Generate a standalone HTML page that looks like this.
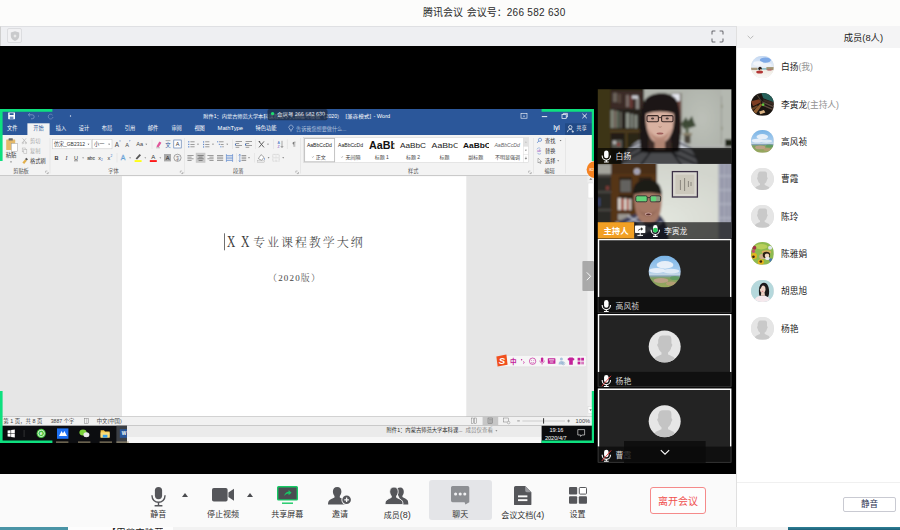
<!DOCTYPE html>
<html lang="zh-CN">
<head>
<meta charset="utf-8">
<title>腾讯会议</title>
<style>
html,body{margin:0;padding:0;}
body{width:900px;height:530px;overflow:hidden;position:relative;background:#fdfdfd;font-family:"Liberation Sans","Noto Sans CJK SC",sans-serif;color:#333;}
.abs{position:absolute;}
#titlebar{left:0;top:0;width:900px;height:26px;background:#fcfcfb;}
#title{left:423px;top:5px;font-size:10px;line-height:16px;color:#2a2a2a;white-space:pre;}
#title b{font-weight:normal;letter-spacing:0.3px;}
#title s{text-decoration:none;display:inline-block;width:3.7px;}
#topbar{left:0;top:26px;width:736px;height:20px;background:#eeeff2;border-top:1px solid #dfe0e3;box-sizing:border-box;border-left:1px solid #cfcfcf;}
#stage{left:0;top:46px;width:736px;height:428px;background:#000;}
#toolbar{left:0;top:474px;width:736px;height:53px;background:#fafafa;}
#panel{left:736px;top:26px;width:164px;height:501px;background:#fff;border-left:1px solid #e0e0e0;box-sizing:border-box;}
#phead{left:0;top:0;width:163px;height:22px;background:#f4f4f5;}
#phead .t{right:17px;top:5px;font-size:9.3px;line-height:14px;color:#222;}
.mem{left:0;width:163px;height:22px;}
.mem .av{left:14.1px;top:-0.6px;width:22.6px;height:22.6px;border-radius:50%;overflow:hidden;background:#e2e2e2;}
.mem .nm{left:44px;top:3px;font-size:8.7px;line-height:16px;color:#222;white-space:nowrap;}
.mem .nm i{font-style:normal;color:#929292;}
.tb{position:absolute;top:0;height:53px;width:60px;text-align:center;}
.tb .lb{position:absolute;left:0;right:0;top:35px;font-size:8px;line-height:12px;color:#333;white-space:nowrap;}
.tb svg{position:absolute;}
.caret{position:absolute;width:0;height:0;border-left:3.5px solid transparent;border-right:3.5px solid transparent;border-bottom:4px solid #4a4b4f;}
#leave{left:650px;top:487px;width:56px;height:27px;box-sizing:border-box;border:1px solid #f58a8a;border-radius:3px;color:#f0504e;font-size:10px;line-height:28px;text-align:center;background:#fdfdfd;}
#mutebtn{left:106px;top:471px;width:53px;height:15px;box-sizing:border-box;border:1px solid #c9cad2;border-radius:2px;color:#2a3050;font-size:8.6px;line-height:13px;text-align:center;background:#fff;}
</style>
</head>
<body>
<div id="titlebar" class="abs"></div>
<div id="title" class="abs">腾讯会议<s> </s>会议号：<b>266 582 630</b></div>

<div id="topbar" class="abs">
  <div class="abs" style="left:6px;top:1px;width:15px;height:14.5px;border:1px solid #dcdde0;border-radius:2px;box-sizing:border-box;background:#f1f1f3;"></div>
  <svg class="abs" style="left:9px;top:4px" width="10" height="10" viewBox="0 0 10 10"><path d="M5 0.3 L9.2 1.6 V5 C9.2 7.6 7 9.2 5 9.9 C3 9.2 0.8 7.6 0.8 5 V1.6 Z" fill="#c9cacc"/><path d="M5 3 L5.6 4.4 L7 5 L5.6 5.6 L5 7 L4.4 5.6 L3 5 L4.4 4.4 Z" fill="#f4f4f4"/></svg>
  <svg class="abs" style="left:710px;top:2.6px" width="13" height="13" viewBox="0 0 13 13" fill="none" stroke="#6a6b70" stroke-width="1.05"><path d="M1 4.4V1.9Q1 1 1.9 1H4.4M8.6 1H11.1Q12 1 12 1.9V4.4M12 8.6V11.1Q12 12 11.1 12H8.6M4.4 12H1.9Q1 12 1 11.1V8.6"/></svg>
</div>

<div id="stage" class="abs"></div>

<!-- SHARED SCREEN -->
<!--WORD-->
<svg class="abs" style="left:0;top:109px" width="594" height="334" viewBox="0 109 594 334" font-family="Liberation Sans, Noto Sans CJK SC, sans-serif">
<rect x="0" y="109" width="594" height="26" fill="#2b579a"/>
<rect x="0" y="135" width="594" height="40.5" fill="#f3f3f3"/>
<rect x="0" y="175" width="594" height="0.8" fill="#d6d6d6"/>
<rect x="0" y="175.8" width="594" height="240.4" fill="#e6e6e6"/>
<rect x="122" y="176.2" width="344.3" height="240" fill="#ffffff"/>
<rect x="587.5" y="175.8" width="6.5" height="240.4" fill="#efefef"/>
<rect x="588" y="183" width="5.5" height="15" fill="#ffffff" stroke="#d0d0d0" stroke-width="0.4"/>
<path d="M589.3 179.8L590.8 178L592.3 179.8Z" fill="#777"/>
<rect x="588" y="406.5" width="5" height="7" fill="#fdfdfd" stroke="#cfcfcf" stroke-width="0.4"/>
<path d="M589.3 409.3L590.6 411L591.9 409.3Z" fill="#666"/>
<rect x="0" y="416.2" width="594" height="9.6" fill="#f1f1f1"/>
<rect x="0" y="425.8" width="594" height="11.2" fill="#ebebeb"/>
<rect x="0" y="437" width="594" height="6" fill="#f7f7f7"/>
<rect x="0" y="425.8" width="127" height="17.2" fill="#0c0d10"/>
<rect x="541.6" y="425.8" width="52.4" height="17.2" fill="#0b0c0e"/>
<rect x="8.2" y="112.4" width="6.8" height="6.8" rx="0.4" fill="#fff"/><rect x="9.6" y="113.2" width="4" height="1.8" fill="#2b579a"/><rect x="9.8" y="116.6" width="3.6" height="2.6" fill="#6f8dc0"/>
<path d="M28.6 114.8H32.2A2 2 0 0 1 32.2 118.8H31" fill="none" stroke="#7f9ac6" stroke-width="0.8"/><path d="M30 113.2L28.2 114.8L30 116.4" fill="none" stroke="#7f9ac6" stroke-width="0.8"/>
<circle cx="38.5" cy="116" r="0.5" fill="#7f9ac6"/>
<path d="M52.6 115.2A2.4 2.4 0 1 0 53 117" fill="none" stroke="#6f8cbd" stroke-width="0.8"/>
<circle cx="70.5" cy="116" r="0.7" fill="#dfe6f2"/>
<text x="203.3" y="117.6" font-size="5.0" fill="#ffffff" text-anchor="start" textLength="139" lengthAdjust="spacingAndGlyphs">附件1：内蒙古师范大学本科课程教学大纲编写模板（2020）</text>
<text x="345.4" y="117.6" font-size="5.1" fill="#ffffff" text-anchor="start" textLength="25.6" lengthAdjust="spacingAndGlyphs">[兼容模式]</text>
<text x="373.4" y="117.7" font-size="5.9" fill="#ffffff" text-anchor="start" textLength="16.8" lengthAdjust="spacingAndGlyphs">- Word</text>
<rect x="267.5" y="109" width="60" height="11.2" rx="2" fill="#1d2a3f" opacity="0.72"/>
<circle cx="272.6" cy="113.6" r="1.7" fill="#1edc6e"/>
<text x="277" y="116" font-size="5.2" fill="#e8edf5" text-anchor="start" textLength="48" lengthAdjust="spacingAndGlyphs" transform="rotate(-1.2 300 115)">会议号 266 582 630</text>
<rect x="521" y="113.4" width="6" height="4.8" fill="none" stroke="#fff" stroke-width="0.6"/><path d="M523 116.6L524 115.2L525 116.6Z" fill="#fff"/>
<rect x="541.8" y="116.2" width="5.4" height="0.9" fill="#fff"/>
<rect x="562" y="114.6" width="4.2" height="3.8" fill="none" stroke="#fff" stroke-width="0.7"/><path d="M563.4 114.6V113.4H567.4V117H566.2" fill="none" stroke="#fff" stroke-width="0.7"/>
<path d="M582.4 113.8L586.8 118.2M586.8 113.8L582.4 118.2" stroke="#fff" stroke-width="0.9"/>
<rect x="27.4" y="123.3" width="22.2" height="12" fill="#f3f3f3"/>
<text x="12.3" y="130.3" font-size="5.2" fill="#ffffff" text-anchor="middle" >文件</text>
<text x="61" y="130.3" font-size="5.2" fill="#ffffff" text-anchor="middle" >插入</text>
<text x="84" y="130.3" font-size="5.2" fill="#ffffff" text-anchor="middle" >设计</text>
<text x="107" y="130.3" font-size="5.2" fill="#ffffff" text-anchor="middle" >布局</text>
<text x="130" y="130.3" font-size="5.2" fill="#ffffff" text-anchor="middle" >引用</text>
<text x="153" y="130.3" font-size="5.2" fill="#ffffff" text-anchor="middle" >邮件</text>
<text x="176.6" y="130.3" font-size="5.2" fill="#ffffff" text-anchor="middle" >审阅</text>
<text x="199.6" y="130.3" font-size="5.2" fill="#ffffff" text-anchor="middle" >视图</text>
<text x="230.3" y="130.3" font-size="5.2" fill="#ffffff" text-anchor="middle" textLength="25.5" lengthAdjust="spacingAndGlyphs">MathType</text>
<text x="266" y="130.3" font-size="5.2" fill="#ffffff" text-anchor="middle" >特色功能</text>
<text x="38.4" y="130.3" font-size="5.2" fill="#2b579a" text-anchor="middle" >开始</text>
<path d="M289.9 129A2.1 2.1 0 1 1 292.1 129V130H289.9ZM290.2 131H291.8" fill="none" stroke="#d0dbec" stroke-width="0.55"/>
<text x="296" y="130.6" font-size="5.2" fill="#b4c4de" text-anchor="start" textLength="50.5" lengthAdjust="spacingAndGlyphs">告诉我您想要做什么...</text>
<rect x="565" y="123.3" width="27.5" height="11.7" fill="#224a86"/>
<circle cx="570.3" cy="127.2" r="1.7" fill="none" stroke="#fff" stroke-width="0.7"/><path d="M567.4 132.2C567.6 130.2 568.8 129.4 570.3 129.4C571.2 129.4 572 129.7 572.5 130.4" fill="none" stroke="#fff" stroke-width="0.7"/><path d="M571.6 131.6H574M572.8 130.4V132.8" stroke="#fff" stroke-width="0.6"/>
<text x="581.5" y="130.4" font-size="5.3" fill="#ffffff" text-anchor="middle" >共享</text>
<text x="556.6" y="130.4" font-size="6.4" fill="#ffffff" text-anchor="middle" stroke="#fff" stroke-width="0.12">lyl</text>
<rect x="6.2" y="139.4" width="9" height="10.6" rx="0.6" fill="#e4b96a"/><rect x="8.6" y="138.2" width="4.2" height="2.2" rx="0.5" fill="#6b6b6b"/><rect x="11.2" y="143.4" width="6.2" height="8" fill="#ffffff" stroke="#8a8a8a" stroke-width="0.4"/>
<text x="11" y="157.4" font-size="5.3" fill="#333" text-anchor="middle" >粘贴</text>
<path d="M10 161.6L11 162.8L12 161.6Z" fill="#666"/>
<path d="M22.6 138.4L26 142.6M26 138.4L22.6 142.6" stroke="#a8a8a8" stroke-width="0.6"/><circle cx="22.8" cy="143" r="0.8" fill="none" stroke="#a8a8a8" stroke-width="0.5"/><circle cx="25.8" cy="143" r="0.8" fill="none" stroke="#a8a8a8" stroke-width="0.5"/>
<text x="30" y="142.6" font-size="5.2" fill="#aaaaaa" text-anchor="start" >剪切</text>
<rect x="22.2" y="148" width="3" height="3.8" fill="#f3f3f3" stroke="#b0b0b0" stroke-width="0.5"/><rect x="23.8" y="149.6" width="3" height="3.8" fill="#f3f3f3" stroke="#b0b0b0" stroke-width="0.5"/>
<text x="30" y="152.8" font-size="5.2" fill="#aaaaaa" text-anchor="start" >复制</text>
<path d="M22.4 162.6L25 159.4L26.8 160.8L24.2 164Z" fill="#e2b04c"/><path d="M25 159.2L26.2 157.8L28 159.2L26.8 160.6Z" fill="#555"/>
<text x="30" y="162.8" font-size="5.2" fill="#333" text-anchor="start" >格式刷</text>
<text x="21" y="173.2" font-size="5.2" fill="#555" text-anchor="middle" >剪贴板</text>
<path d="M45.599999999999994 171.0H47.4M45.599999999999994 171.0V172.79999999999998" stroke="#777" stroke-width="0.4" fill="none"/><path d="M48.199999999999996 172.0V173.6H46.599999999999994" stroke="#777" stroke-width="0.5" fill="none"/>
<rect x="49.75" y="138" width="0.5" height="35.5" fill="#dadada"/>
<rect x="52.6" y="139.6" width="38.6" height="9.2" fill="#fff" stroke="#c6c6c6" stroke-width="0.5"/>
<text x="54" y="146.1" font-size="5.2" fill="#333" text-anchor="start" textLength="31" lengthAdjust="spacingAndGlyphs">仿宋_GB2312</text>
<path d="M87.6 143.8L88.5 144.9L89.4 143.8Z" fill="#555"/>
<rect x="92.6" y="139.6" width="19.4" height="9.2" fill="#fff" stroke="#c6c6c6" stroke-width="0.5"/>
<text x="94" y="146.1" font-size="5.2" fill="#333" text-anchor="start" >小一</text>
<path d="M108.2 143.8L109.1 144.9L110 143.8Z" fill="#555"/>
<text x="117" y="146.6" font-size="6.4" fill="#444" text-anchor="middle" >A</text>
<path d="M119.2 141.2L120 140.2L120.8 141.2Z" fill="#3b6fc4"/>
<text x="127" y="146.6" font-size="5.6" fill="#444" text-anchor="middle" >A</text>
<path d="M129 140.4L129.8 141.4L130.6 140.4Z" fill="#3b6fc4"/>
<text x="139.6" y="146.4" font-size="5.6" fill="#444" text-anchor="middle" >Aa</text>
<path d="M145.4 143.8L146.3 144.9L147.2 143.8Z" fill="#666"/>
<rect x="151.75" y="139.5" width="0.5" height="9.5" fill="#dadada"/>
<path d="M156.4 146.4L159.4 141.6L161.4 142.8L158.4 147.6Z" fill="#e0559a"/><path d="M156 147.8H160" stroke="#888" stroke-width="0.5"/>
<text x="168" y="146.6" font-size="5.4" fill="#2b579a" text-anchor="middle" >文</text>
<path d="M165.6 140.6H170.4" stroke="#555" stroke-width="0.4"/>
<rect x="173.8" y="140" width="7.4" height="8" fill="#fff" stroke="#4a6fa8" stroke-width="0.6"/>
<text x="177.5" y="146.4" font-size="5.6" fill="#333" text-anchor="middle" >A</text>
<text x="56.5" y="159.8" font-size="5.6" fill="#333" text-anchor="middle" font-weight="bold">B</text>
<text x="66.5" y="159.8" font-size="5.6" fill="#333" text-anchor="middle" font-style="italic" font-family="Liberation Serif, serif">I</text>
<text x="76" y="159.6" font-size="5.6" fill="#333" text-anchor="middle" >U</text>
<path d="M74 160.8H78" stroke="#333" stroke-width="0.5"/>
<path d="M82.2 157.4L83.1 158.5L84 157.4Z" fill="#666"/>
<text x="91" y="159.6" font-size="4.8" fill="#444" text-anchor="middle" >abc</text>
<path d="M87.2 157.9H94.8" stroke="#444" stroke-width="0.4"/>
<text x="99.6" y="159.8" font-size="5.4" fill="#333" text-anchor="middle" >x</text>
<text x="102" y="161.2" font-size="3.2" fill="#3b6fc4" text-anchor="middle" >2</text>
<text x="108.8" y="159.8" font-size="5.4" fill="#333" text-anchor="middle" >x</text>
<text x="111.4" y="157" font-size="3.2" fill="#3b6fc4" text-anchor="middle" >2</text>
<rect x="116.75" y="153" width="0.5" height="9.5" fill="#dadada"/>
<text x="123" y="160.2" font-size="6.8" fill="#f3f3f3" text-anchor="middle" stroke="#5b9bd5" stroke-width="0.45">A</text>
<path d="M129.2 157.4L130.1 158.5L131 157.4Z" fill="#666"/>
<path d="M135.6 158.4L139.6 154L141 155.2L137 159.4Z" fill="#555"/><rect x="134.6" y="160.2" width="7" height="1.7" fill="#ffff00"/>
<path d="M144.4 157.4L145.3 158.5L146.2 157.4Z" fill="#666"/>
<text x="153.2" y="159.4" font-size="6" fill="#333" text-anchor="middle" >A</text>
<rect x="149.8" y="160.2" width="7" height="1.7" fill="#ff0000"/>
<path d="M159.4 157.4L160.3 158.5L161.2 157.4Z" fill="#666"/>
<rect x="164" y="154" width="7" height="7.4" fill="#a9a9a9"/>
<text x="167.5" y="160" font-size="5.6" fill="#222" text-anchor="middle" >A</text>
<circle cx="177.5" cy="157.8" r="3.6" fill="none" stroke="#555" stroke-width="0.5"/>
<text x="177.5" y="159.6" font-size="4.2" fill="#444" text-anchor="middle" >字</text>
<text x="113.5" y="173.2" font-size="5.2" fill="#555" text-anchor="middle" >字体</text>
<path d="M180.3 171.0H182.1M180.3 171.0V172.79999999999998" stroke="#777" stroke-width="0.4" fill="none"/><path d="M182.9 172.0V173.6H181.3" stroke="#777" stroke-width="0.5" fill="none"/>
<rect x="184.15" y="138" width="0.5" height="35.5" fill="#dadada"/>
<rect x="188.2" y="141.3" width="1.1" height="1.1" fill="#3b6fc4"/>
<rect x="188.2" y="143.8" width="1.1" height="1.1" fill="#3b6fc4"/>
<rect x="188.2" y="146.3" width="1.1" height="1.1" fill="#3b6fc4"/>
<rect x="190.4" y="141.6" width="4.2" height="0.55" fill="#555"/>
<rect x="190.4" y="144.1" width="4.2" height="0.55" fill="#555"/>
<rect x="190.4" y="146.6" width="4.2" height="0.55" fill="#555"/>
<path d="M197.1 143.8L198 144.9L198.9 143.8Z" fill="#666"/>
<rect x="203.2" y="141.3" width="0.9" height="1.3" fill="#3b6fc4"/>
<rect x="203.2" y="143.8" width="0.9" height="1.3" fill="#3b6fc4"/>
<rect x="203.2" y="146.3" width="0.9" height="1.3" fill="#3b6fc4"/>
<rect x="205.2" y="141.6" width="4.2" height="0.55" fill="#555"/>
<rect x="205.2" y="144.1" width="4.2" height="0.55" fill="#555"/>
<rect x="205.2" y="146.6" width="4.2" height="0.55" fill="#555"/>
<path d="M212.1 143.8L213 144.9L213.9 143.8Z" fill="#666"/>
<rect x="217.2" y="141.3" width="1" height="1" fill="#3b6fc4"/><rect x="218.8" y="143.8" width="1" height="1" fill="#3b6fc4"/><rect x="220.4" y="146.3" width="1" height="1" fill="#3b6fc4"/>
<rect x="219" y="141.6" width="4.6" height="0.55" fill="#555"/><rect x="220.6" y="144.1" width="3" height="0.55" fill="#555"/><rect x="222.2" y="146.6" width="1.6" height="0.55" fill="#555"/>
<path d="M226.29999999999998 143.8L227.2 144.9L228.1 143.8Z" fill="#666"/>
<rect x="232.25" y="139.5" width="0.5" height="9.5" fill="#dadada"/>
<rect x="235.6" y="141.2" width="6.4" height="0.55" fill="#555"/>
<rect x="235.6" y="143.1" width="3.6" height="0.55" fill="#555"/>
<rect x="235.6" y="145.0" width="6.4" height="0.55" fill="#555"/>
<rect x="235.6" y="146.89999999999998" width="3.6" height="0.55" fill="#555"/>
<path d="M236 143.2V146L234.8 144.6Z" fill="#3b6fc4"/>
<rect x="245.6" y="141.2" width="6.4" height="0.55" fill="#555"/>
<rect x="245.6" y="143.1" width="3.6" height="0.55" fill="#555"/>
<rect x="245.6" y="145.0" width="6.4" height="0.55" fill="#555"/>
<rect x="245.6" y="146.89999999999998" width="3.6" height="0.55" fill="#555"/>
<path d="M245 143.2V146L246.4 144.6Z" fill="#3b6fc4"/>
<rect x="255.35" y="139.5" width="0.5" height="9.5" fill="#dadada"/>
<path d="M259 141.4L264 147.4M264 141.4L259 147.4" stroke="#555" stroke-width="0.9"/><path d="M258.6 141.2L260.4 141.2L259.4 142.6Z" fill="#333"/>
<path d="M267.1 143.8L268 144.9L268.9 143.8Z" fill="#666"/>
<rect x="273.25" y="139.5" width="0.5" height="9.5" fill="#dadada"/>
<text x="278.6" y="143.6" font-size="3.6" fill="#3b6fc4" text-anchor="middle" >A</text>
<text x="278.6" y="147.8" font-size="3.6" fill="#8a4fbf" text-anchor="middle" >Z</text>
<path d="M282 140.8V147.2M280.8 146L282 147.6L283.2 146" stroke="#555" stroke-width="0.5" fill="none"/>
<rect x="286.95" y="139.5" width="0.5" height="9.5" fill="#dadada"/>
<path d="M294.8 142V146.8M293.8 142V146.8M293.8 142H295.6" stroke="#666" stroke-width="0.4" fill="none"/><path d="M292.6 143.2A1.2 1.2 0 0 1 293.8 142V144.4A1.2 1.2 0 0 1 292.6 143.2Z" fill="#666"/>
<rect x="187.4" y="155.0" width="6.2" height="0.55" fill="#555"/>
<rect x="187.4" y="156.8" width="4.2" height="0.55" fill="#555"/>
<rect x="187.4" y="158.6" width="6.2" height="0.55" fill="#555"/>
<rect x="187.4" y="160.4" width="4.2" height="0.55" fill="#555"/>
<rect x="195.8" y="152.8" width="9.6" height="10" fill="#c9c9c9"/>
<rect x="197.5" y="155.0" width="6.2" height="0.55" fill="#444"/>
<rect x="198.6" y="156.8" width="4" height="0.55" fill="#444"/>
<rect x="197.5" y="158.6" width="6.2" height="0.55" fill="#444"/>
<rect x="198.6" y="160.4" width="4" height="0.55" fill="#444"/>
<rect x="207.4" y="155.0" width="6.2" height="0.55" fill="#555"/>
<rect x="209.4" y="156.8" width="4.2" height="0.55" fill="#555"/>
<rect x="207.4" y="158.6" width="6.2" height="0.55" fill="#555"/>
<rect x="209.4" y="160.4" width="4.2" height="0.55" fill="#555"/>
<rect x="217" y="155.0" width="6.2" height="0.55" fill="#555"/>
<rect x="217" y="156.8" width="6.2" height="0.55" fill="#555"/>
<rect x="217" y="158.6" width="6.2" height="0.55" fill="#555"/>
<rect x="217" y="160.4" width="6.2" height="0.55" fill="#555"/>
<rect x="226.4" y="155.0" width="6.2" height="0.55" fill="#3b6fc4"/>
<rect x="226.4" y="156.8" width="6.2" height="0.55" fill="#3b6fc4"/>
<rect x="226.4" y="158.6" width="6.2" height="0.55" fill="#3b6fc4"/>
<rect x="226.4" y="160.4" width="6.2" height="0.55" fill="#3b6fc4"/>
<path d="M226.4 154V162M232.6 154V162" stroke="#3b6fc4" stroke-width="0.5"/>
<rect x="236.35" y="153" width="0.5" height="9.5" fill="#dadada"/>
<rect x="241.6" y="155.0" width="4.6" height="0.55" fill="#555"/>
<rect x="241.6" y="156.8" width="4.6" height="0.55" fill="#555"/>
<rect x="241.6" y="158.6" width="4.6" height="0.55" fill="#555"/>
<rect x="241.6" y="160.4" width="4.6" height="0.55" fill="#555"/>
<path d="M239.8 154.4V161.6M238.8 155.6L239.8 154.2L240.8 155.6M238.8 160.4L239.8 161.8L240.8 160.4" stroke="#3b6fc4" stroke-width="0.5" fill="none"/>
<path d="M248.1 157.3L249 158.4L249.9 157.3Z" fill="#666"/>
<rect x="254.35" y="153" width="0.5" height="9.5" fill="#dadada"/>
<path d="M258.4 158.6L261 154.6L264 157.2L261.6 160.4Z" fill="#fff" stroke="#555" stroke-width="0.5"/><rect x="257.6" y="160.8" width="7" height="1.4" fill="#e8e8e8" stroke="#999" stroke-width="0.3"/><path d="M264.4 157.8C265 158.8 265.2 159.4 264.6 159.8C264 159.4 264 158.8 264.4 157.8Z" fill="#3b6fc4"/>
<path d="M267.70000000000005 157.3L268.6 158.4L269.5 157.3Z" fill="#666"/>
<rect x="272.8" y="154.4" width="6.4" height="6.8" fill="none" stroke="#b5b5b5" stroke-width="0.5" stroke-dasharray="0.8 0.6"/><path d="M276 154.4V161.2M272.8 157.8H279.2" stroke="#b5b5b5" stroke-width="0.4" stroke-dasharray="0.8 0.6"/>
<path d="M282.3 157.3L283.2 158.4L284.09999999999997 157.3Z" fill="#666"/>
<text x="238.3" y="173.2" font-size="5.2" fill="#555" text-anchor="middle" >段落</text>
<path d="M295.8 171.0H297.6M295.8 171.0V172.79999999999998" stroke="#777" stroke-width="0.4" fill="none"/><path d="M298.4 172.0V173.6H296.8" stroke="#777" stroke-width="0.5" fill="none"/>
<rect x="300.15" y="138" width="0.5" height="35.5" fill="#dadada"/>
<rect x="303.7" y="137.6" width="224.8" height="25" fill="#ffffff" stroke="#d0d0d0" stroke-width="0.5"/>
<rect x="304.6" y="138.4" width="30" height="23.4" fill="#fff" stroke="#bdbdbd" stroke-width="0.9"/>
<text x="319.4" y="147.4" font-size="4.6" fill="#222" text-anchor="middle" textLength="25" lengthAdjust="spacingAndGlyphs">AaBbCcDd</text>
<text x="320.8" y="158.6" font-size="5" fill="#444" text-anchor="middle" >正文</text>
<path d="M312 156.8L312.6 157.6L313.8 156" stroke="#777" stroke-width="0.4" fill="none"/>
<text x="350.6" y="147.4" font-size="4.6" fill="#222" text-anchor="middle" textLength="25" lengthAdjust="spacingAndGlyphs">AaBbCcDd</text>
<text x="353" y="158.6" font-size="5" fill="#444" text-anchor="middle" >无间隔</text>
<path d="M341.2 156.8L341.8 157.6L343 156" stroke="#777" stroke-width="0.4" fill="none"/>
<clipPath id="g3"><rect x="366" y="138" width="28.4" height="24"/></clipPath><clipPath id="g5"><rect x="429" y="138" width="28.6" height="24"/></clipPath><clipPath id="g6"><rect x="460" y="138" width="29" height="24"/></clipPath>
<text x="369" y="149.2" font-size="10.6" fill="#111" text-anchor="start" font-weight="bold" clip-path="url(#g3)" textLength="28" lengthAdjust="spacingAndGlyphs">AaBb</text>
<text x="381.8" y="158.6" font-size="5" fill="#444" text-anchor="middle" >标题 1</text>
<text x="413" y="148.4" font-size="7.4" fill="#222" text-anchor="middle" textLength="26" lengthAdjust="spacingAndGlyphs">AaBbC</text>
<text x="413" y="158.6" font-size="5" fill="#444" text-anchor="middle" >标题 2</text>
<text x="431.6" y="148.4" font-size="7.4" fill="#222" text-anchor="start" clip-path="url(#g5)" textLength="32" lengthAdjust="spacingAndGlyphs">AaBbCc</text>
<text x="444.4" y="158.6" font-size="5" fill="#444" text-anchor="middle" >标题</text>
<text x="463" y="148.4" font-size="7.4" fill="#111" text-anchor="start" font-weight="bold" clip-path="url(#g6)" textLength="32.4" lengthAdjust="spacingAndGlyphs">AaBbCc</text>
<text x="475.8" y="158.6" font-size="5" fill="#444" text-anchor="middle" >副标题</text>
<text x="507.2" y="147.4" font-size="4.6" fill="#666" text-anchor="middle" font-style="italic" textLength="25.5" lengthAdjust="spacingAndGlyphs">AaBbCcDd</text>
<text x="507.4" y="158.6" font-size="5" fill="#444" text-anchor="middle" >不明显强调</text>
<rect x="523.4" y="137.8" width="5" height="8.2" fill="#e2e2e2"/><rect x="523.4" y="146" width="5" height="0.4" fill="#cfcfcf"/><rect x="523.4" y="154.2" width="5" height="0.4" fill="#cfcfcf"/><rect x="523.2" y="137.8" width="0.4" height="24.6" fill="#cfcfcf"/>
<path d="M525 142.6L525.9 141.5L526.8 142.6Z" fill="#aaa"/><path d="M525 149.8L525.9 150.9L526.8 149.8Z" fill="#555"/><path d="M525 157.2H526.8M525 158.2L525.9 159.3L526.8 158.2Z" fill="#555" stroke="#555" stroke-width="0.3"/>
<text x="413.3" y="173.2" font-size="5.2" fill="#555" text-anchor="middle" >样式</text>
<path d="M528.5999999999999 171.0H530.4M528.5999999999999 171.0V172.79999999999998" stroke="#777" stroke-width="0.4" fill="none"/><path d="M531.1999999999999 172.0V173.6H529.5999999999999" stroke="#777" stroke-width="0.5" fill="none"/>
<rect x="533.15" y="138" width="0.5" height="35.5" fill="#dadada"/>
<circle cx="540" cy="139.8" r="1.6" fill="none" stroke="#3b6fc4" stroke-width="0.6"/><path d="M538.8 141L537.2 142.8" stroke="#3b6fc4" stroke-width="0.7"/>
<text x="545" y="142.6" font-size="5.2" fill="#333" text-anchor="start" >查找</text>
<path d="M559.7 140.1L560.6 141.2L561.5 140.1Z" fill="#666"/>
<text x="539" y="152" font-size="3.6" fill="#8a4fbf" text-anchor="middle" >ab</text>
<path d="M537 149.4A2 2 0 0 1 540.6 148.8M541 153.2A2 2 0 0 1 537.4 152.8" stroke="#3b6fc4" stroke-width="0.4" fill="none"/>
<text x="545" y="152.8" font-size="5.2" fill="#333" text-anchor="start" >替换</text>
<path d="M538 158.2V163L539.2 161.8L540 163.6L540.8 163.2L540 161.6H541.6Z" fill="#fff" stroke="#555" stroke-width="0.4"/>
<text x="545" y="162.8" font-size="5.2" fill="#333" text-anchor="start" >选择</text>
<path d="M557.3000000000001 160.3L558.2 161.4L559.1 160.3Z" fill="#666"/>
<text x="549.6" y="173.2" font-size="5.2" fill="#555" text-anchor="middle" >编辑</text>
<rect x="565.35" y="138" width="0.5" height="35.5" fill="#dadada"/>
<clipPath id="wc"><rect x="0" y="109" width="594" height="334"/></clipPath>
<g clip-path="url(#wc)"><circle cx="595" cy="169.6" r="8.4" fill="#f58220"/><text x="591.6" y="171.4" font-size="4.4" fill="#fff" text-anchor="middle">82</text></g>
<rect x="224" y="233.3" width="0.7" height="17" fill="#333"/>
<text y="247.1" fill="#3c3c3c" font-weight="300" font-family="Liberation Serif, Noto Serif CJK SC, serif"><tspan x="227.1" font-size="16.6" textLength="8.2" lengthAdjust="spacingAndGlyphs">X</tspan><tspan x="240.9" font-size="16.6" textLength="8.4" lengthAdjust="spacingAndGlyphs">X</tspan><tspan x="253.1" y="246.6" font-size="12" textLength="109.6" lengthAdjust="spacing">专业课程教学大纲</tspan></text>
<text x="268" y="280.8" font-size="9" fill="#444" font-weight="300" font-family="Liberation Serif, Noto Serif CJK SC, serif" textLength="52" lengthAdjust="spacing">（2020版）</text>
<rect x="582.4" y="261" width="11.6" height="30" rx="1" fill="#9d9d9d" opacity="0.85"/><path d="M586.8 272.4L590.6 276.3L586.8 280.2" stroke="#ffffff" stroke-width="0.9" fill="none"/>
<rect x="497" y="355.4" width="89.4" height="11.4" rx="1.5" fill="#f6f6f6" stroke="#d8d8d8" stroke-width="0.4"/>
<path d="M496.4 356.4L506.4 354.6L507.6 364.8L497.6 366.6Z" fill="#f0501e"/>
<text x="502" y="364.4" font-size="9.6" fill="#ffffff" text-anchor="middle" font-weight="bold" font-style="italic">S</text>
<text x="513.4" y="363.6" font-size="6.6" fill="#c4239a" text-anchor="middle" font-weight="bold">中</text>
<circle cx="521.6" cy="359.8" r="0.7" fill="#c4239a"/><path d="M523.4 361.6C524.4 361.6 524.4 363 523.4 363.6" stroke="#c4239a" stroke-width="0.8" fill="none"/>
<circle cx="532.6" cy="361.2" r="3.2" fill="none" stroke="#c4239a" stroke-width="0.7"/><circle cx="531.4" cy="360.4" r="0.45" fill="#c4239a"/><circle cx="533.8" cy="360.4" r="0.45" fill="#c4239a"/><path d="M531.2 362.4Q532.6 363.6 534 362.4" stroke="#c4239a" stroke-width="0.5" fill="none"/>
<rect x="540.9" y="357.4" width="2.4" height="4.6" rx="1.2" fill="#c4239a"/><path d="M539.8 360.6A2.3 2.3 0 0 0 544.4 360.6M542.1 363V364.6" stroke="#c4239a" stroke-width="0.6" fill="none"/>
<rect x="547.8" y="358.2" width="7.6" height="5.6" rx="0.6" fill="#c4239a"/><rect x="549" y="359.4" width="5.2" height="1" fill="#f6f6f6"/><rect x="549.8" y="361.6" width="3.6" height="0.8" fill="#f6f6f6"/>
<circle cx="561.4" cy="359" r="1.5" fill="#a9c3dc"/><path d="M558.6 364.6C558.6 361.8 560 361 561.4 361C562.8 361 564.2 361.8 564.2 364.6Z" fill="#a9c3dc"/><circle cx="563.4" cy="363.4" r="1.5" fill="none" stroke="#8fa9c4" stroke-width="0.5"/>
<path d="M567.4 359L569.4 357.6H572.6L574.6 359L573.6 360.6L572.8 360.2V364.8H569.2V360.2L568.4 360.6Z" fill="#c4239a"/>
<rect x="577.6" y="357.8" width="2.8" height="2.8" fill="#c4239a"/><rect x="581.2" y="357.8" width="2.8" height="2.8" fill="#c4239a"/><rect x="577.6" y="361.6" width="2.8" height="2.8" fill="#c4239a"/><rect x="581.2" y="361.6" width="2.8" height="2.8" fill="#c4239a" opacity="0.6"/>
<text x="3.3" y="422.7" font-size="5.2" fill="#444" text-anchor="start" textLength="39" lengthAdjust="spacingAndGlyphs">第 1 页，共 8 页</text>
<text x="50.7" y="422.7" font-size="5.2" fill="#444" text-anchor="start" textLength="23.4" lengthAdjust="spacingAndGlyphs">3887 个字</text>
<rect x="84.6" y="418.4" width="4.2" height="4.8" fill="none" stroke="#666" stroke-width="0.4"/><path d="M86.7 418.4V423.2" stroke="#666" stroke-width="0.3"/>
<text x="96.7" y="422.7" font-size="5.2" fill="#444" text-anchor="start" textLength="25" lengthAdjust="spacingAndGlyphs">中文(中国)</text>
<rect x="471.6" y="418" width="2" height="5.2" fill="none" stroke="#666" stroke-width="0.4"/><rect x="474.2" y="418" width="2" height="5.2" fill="none" stroke="#666" stroke-width="0.4"/>
<rect x="482.6" y="416.6" width="15.6" height="9" fill="#c6c6c6"/><rect x="488" y="418" width="4.8" height="5.6" fill="none" stroke="#555" stroke-width="0.4"/><path d="M488.8 419.4H492M488.8 420.8H492M488.8 422.2H492" stroke="#555" stroke-width="0.35"/>
<rect x="503.8" y="418" width="5" height="4" fill="none" stroke="#666" stroke-width="0.4"/><circle cx="508.6" cy="422.6" r="1.3" fill="#f1f1f1" stroke="#666" stroke-width="0.35"/>
<rect x="517.2" y="420.7" width="2.6" height="0.5" fill="#444"/><rect x="522.4" y="420.8" width="42.6" height="0.4" fill="#9a9a9a"/><rect x="543" y="418.2" width="1.1" height="5.4" fill="#444"/><path d="M567.2 420.95H570M568.6 419.5V422.4" stroke="#444" stroke-width="0.5"/>
<text x="575.6" y="422.8" font-size="5.1" fill="#444" text-anchor="start" textLength="14.6" lengthAdjust="spacingAndGlyphs">100%</text>
<path d="M7.6 430.6L10.6 430.2V433.2H7.6ZM11.1 430.1L14.8 429.6V433.2H11.1ZM7.6 433.8H10.6V436.8L7.6 436.4ZM11.1 433.8H14.8V437.4L11.1 436.9Z" fill="#ffffff"/>
<rect x="23.8" y="430" width="0.5" height="7" fill="#555"/>
<circle cx="41.2" cy="433.4" r="4.6" fill="#3fbf3a"/><circle cx="41.2" cy="433.4" r="3.2" fill="none" stroke="#e8f7e0" stroke-width="0.9"/><text x="41.2" y="435.2" font-size="4.8" fill="#ffffff" text-anchor="middle" font-weight="bold">e</text>
<rect x="57" y="428.4" width="11.4" height="10.4" fill="#1d6ff2"/><path d="M59 436L61.6 431L62.9 433.6L64.4 431L67 436Z" fill="#ffffff"/>
<ellipse cx="83" cy="432.6" rx="3.6" ry="3" fill="#7bd23a"/><ellipse cx="86.4" cy="434.8" rx="3" ry="2.5" fill="#e8e8e8"/>
<path d="M100.6 430.2H104L105 431.4H109.6V437.6H100.6Z" fill="#f3c84b"/><rect x="100.6" y="432.4" width="9" height="5.2" fill="#f8dc7a"/><rect x="102.8" y="434.8" width="4.6" height="2.8" fill="#3aa0e8"/>
<rect x="116.4" y="425.8" width="10.6" height="17.2" fill="#3c3f44"/><rect x="119.8" y="429.2" width="7.2" height="8.6" fill="#2b579a"/><text x="124" y="435.4" font-size="4.8" fill="#fff" text-anchor="middle" font-weight="bold">W</text>
<rect x="56" y="441.6" width="12.4" height="1" fill="#a79a78"/>
<rect x="78" y="441.6" width="12.4" height="1" fill="#a79a78"/>
<rect x="99.6" y="441.6" width="12.4" height="1" fill="#a79a78"/>
<rect x="116.4" y="441.6" width="12.4" height="1" fill="#a79a78"/>
<text x="386.6" y="432.4" font-size="5.2" fill="#2a2a2a" text-anchor="start" textLength="76" lengthAdjust="spacingAndGlyphs">附件1：内蒙古师范大学本科课...</text>
<text x="465.6" y="432.4" font-size="5.2" fill="#8a8a8a" text-anchor="start" textLength="27.4" lengthAdjust="spacingAndGlyphs">成员仅查看</text>
<path d="M495.4 430.2L496.4 431.4L497.4 430.2Z" fill="#777"/>
<text x="556.4" y="431.6" font-size="5.7" fill="#ffffff" text-anchor="middle" textLength="14" lengthAdjust="spacingAndGlyphs">19:16</text>
<text x="555.8" y="440" font-size="5.6" fill="#ffffff" text-anchor="middle" textLength="21.8" lengthAdjust="spacingAndGlyphs">2020/4/7</text>
<path d="M577.8 429.6H584.6V435H581.8L580.6 436.4V435H577.8Z" fill="none" stroke="#ffffff" stroke-width="0.6"/>
<path d="M0 109H52.4V111.8H2.6V161H0Z" fill="#0ee07f"/>
<path d="M594 109H541.6V111.8H591.8V161H594Z" fill="#0ee07f"/>
<path d="M0 443H52.4V440.4H2.6V391H0Z" fill="#0ee07f"/>
<path d="M594 443H541.6V440.6H591.8V391H594Z" fill="#0ee07f"/>
</svg>
<!--/WORD-->

<!-- VIDEO TILES -->
<!--TILES-->
<svg class="abs" style="left:596px;top:88px" width="140" height="380" viewBox="596 88 140 380" font-family="Liberation Sans, Noto Sans CJK SC, sans-serif">
<defs>
<filter id="b1" x="-10%" y="-10%" width="120%" height="120%"><feGaussianBlur stdDeviation="1.1"/></filter>
<filter id="b2" x="-10%" y="-10%" width="120%" height="120%"><feGaussianBlur stdDeviation="0.6"/></filter>
<filter id="b3" x="-10%" y="-10%" width="120%" height="120%"><feGaussianBlur stdDeviation="0.8"/></filter>
<clipPath id="t1"><rect x="597.8" y="89.3" width="133.6" height="74.4"/></clipPath>
<clipPath id="t2"><rect x="597.8" y="163.9" width="133.6" height="74.7"/></clipPath>
<linearGradient id="w1" x1="0" y1="0" x2="1" y2="0"><stop offset="0" stop-color="#8f8f8c"/><stop offset="0.45" stop-color="#a6a6a4"/><stop offset="1" stop-color="#8c8c8a"/></linearGradient>
<linearGradient id="w2" x1="0" y1="0" x2="0" y2="1"><stop offset="0" stop-color="#c9c9c5"/><stop offset="1" stop-color="#bdbdb9"/></linearGradient>
<radialGradient id="sk" cx="0.5" cy="0.5" r="0.5"><stop offset="0" stop-color="#f0f0f0"/><stop offset="1" stop-color="#e2e2e2"/></radialGradient>
<linearGradient id="sky" x1="0" y1="0" x2="0" y2="1"><stop offset="0" stop-color="#79b4e6"/><stop offset="0.5" stop-color="#a9cdee"/><stop offset="0.6" stop-color="#c4d6e4"/><stop offset="0.64" stop-color="#86a2b8"/><stop offset="0.7" stop-color="#7f9f62"/><stop offset="1" stop-color="#9aa85c"/></linearGradient>
<radialGradient id="hl1" cx="0.5" cy="0.5" r="0.6"><stop offset="0" stop-color="#bcc0b8"/><stop offset="1" stop-color="#b0b4ac"/></radialGradient>
<radialGradient id="hl2" cx="0.45" cy="0.75" r="0.7"><stop offset="0" stop-color="#e3e6de"/><stop offset="1" stop-color="#d2d5cd"/></radialGradient>
</defs>
<g clip-path="url(#t1)"><g filter="url(#b3)">
<rect x="596" y="88" width="138" height="78" fill="#b0b4ac"/>
<rect x="682" y="88" width="40" height="62" fill="url(#hl1)"/>
<rect x="594" y="86" width="50" height="80" fill="#2c2616"/>
<rect x="594" y="86" width="16.5" height="80" fill="#3d3419"/>
<rect x="611" y="91" width="32" height="18" fill="#3a2c26"/>
<rect x="613" y="93" width="4" height="9" fill="#6a625a"/><rect x="618" y="94" width="3" height="9" fill="#57463e"/><rect x="626" y="95" width="3" height="12" fill="#7a6a66"/><rect x="630" y="96" width="2.4" height="12" fill="#6e3a34"/><rect x="636" y="98" width="3" height="11" fill="#8a8884"/>
<rect x="632" y="95.6" width="6" height="3" fill="#d4d6de"/>
<rect x="610" y="109" width="33" height="20" fill="#28231a"/>
<rect x="610.6" y="110" width="3" height="18" fill="#868c7e"/><rect x="613.8" y="110.5" width="2.6" height="17.5" fill="#786a62"/><rect x="616.6" y="111" width="2" height="17" fill="#6c7868"/><rect x="620" y="112" width="1.6" height="16" fill="#6a6a62"/>
<rect x="626" y="113" width="3.4" height="15" fill="#8c9288"/><rect x="630.4" y="114" width="3" height="14" fill="#7c827a"/><rect x="634.4" y="115" width="3" height="13.4" fill="#868c84"/>
<rect x="610" y="129.4" width="34" height="3.4" fill="#4c3b1c"/>
<rect x="611" y="133" width="14" height="16" fill="#241f12"/><rect x="625" y="133" width="2.6" height="16" fill="#4a3a1c"/>
<rect x="612" y="140" width="10" height="8" fill="#5a5a52"/><rect x="613" y="141" width="3" height="3" fill="#b9b9b9"/><rect x="617" y="143" width="3" height="3" fill="#8a3a34"/>
<rect x="670.6" y="93" width="11.4" height="42" fill="#87857d"/><rect x="671.6" y="94" width="8" height="7" fill="#e6e8f0"/><rect x="676.6" y="101" width="4.4" height="32" fill="#6f4a42"/><rect x="672" y="101" width="4.6" height="32" fill="#93918a"/>
<rect x="721.4" y="89" width="12" height="58" fill="#b4b8b0"/><rect x="721" y="96" width="0.8" height="50" fill="#8f938b"/><rect x="721" y="104.6" width="1.4" height="3.4" fill="#8a8a7a"/><rect x="721" y="126.6" width="1.4" height="3.4" fill="#8a8a7a"/>
<path d="M681 124L686 117L688 121L692 116L694 122L696 126L690 128L684 129Z" fill="#3d4a34"/><rect x="685.6" y="127" width="3" height="6" fill="#55604a"/><rect x="683" y="133" width="9" height="2.4" fill="#8a8068"/><rect x="684.4" y="135.4" width="6" height="8" fill="#4a443a"/>
<rect x="690" y="144.6" width="44" height="4" fill="#b4b6b2"/><rect x="725" y="139.4" width="8" height="7" fill="#1c2212"/>
<rect x="690" y="148" width="44" height="18" fill="#5a5a58"/>
<path d="M622 166C624 150 634 141 648 137H672C684 140 694 147 698 166Z" fill="#c9ccd4"/>
<path d="M626 154L646 143M624 161L650 147M630 148L644 140M676 141L694 150M674 147L697 158M672 153L698 165M640 166L652 150M682 166L672 152" stroke="#3d3f4a" stroke-width="1.5" fill="none"/>
<path d="M640.6 152C639 130 640 108 645 100C650 91.6 670 90.6 676 99C681 108 682 130 679 152L670 153L650 153Z" fill="#1e1815"/>
<path d="M648 152L649 132L670 132L672 152Z" fill="#3a2a26"/>
<path d="M646 112C646 108 673 108 673.6 112C675 126 672 136 666 141C662 144 657 144 653 141C648 136 645 126 646 112Z" fill="#d8b1a1"/>
<path d="M648 128C650 136 654 142 659.6 143C665 142 669 136 671.6 128C668 134 664 137 659.6 137C655 137 651 134 648 128Z" fill="#b98b7a"/>
<rect x="654.6" y="140" width="10.4" height="9" fill="#b08472"/>
<path d="M642.6 108C650 102 668 102 677 108L676 114.6C668 110.6 652 110.6 645 114.6Z" fill="#1e1815"/>
</g><g filter="url(#b2)">
<rect x="647" y="115.6" width="11.4" height="6.2" rx="1.2" fill="#cda698" stroke="#3a2a28" stroke-width="1.1"/><rect x="661.6" y="115.6" width="11.4" height="6.2" rx="1.2" fill="#cda698" stroke="#3a2a28" stroke-width="1.1"/><path d="M658.4 117.6H661.6" stroke="#3a2a28" stroke-width="0.9"/>
<ellipse cx="652.6" cy="118.6" rx="1.6" ry="1" fill="#4a3a38"/><ellipse cx="667.2" cy="118.6" rx="1.6" ry="1" fill="#4a3a38"/>
<ellipse cx="660" cy="133.4" rx="3.4" ry="1" fill="#a0605c"/><path d="M658.6 126.6Q660 128 661.6 126.6" stroke="#a88070" stroke-width="0.8" fill="none"/>
</g>
<rect x="597.8" y="148" width="133.6" height="15.7" fill="#000" opacity="0.64"/>
</g>
<g transform="translate(601.6 150.6) scale(1.18)"><rect x="2.1" y="0" width="3.8" height="6.4" rx="1.9" fill="#ffffff"/><path d="M0.5 4.2V4.6A3.5 3.5 0 0 0 7.5 4.6V4.2" fill="none" stroke="#ffffff" stroke-width="0.9"/><path d="M4 8V9.6M2 9.7H6" stroke="#ffffff" stroke-width="0.9" fill="none"/></g>
<text x="615.6" y="159.4" font-size="7.8" fill="#e6e6e6">白扬</text>
<g clip-path="url(#t2)"><g filter="url(#b3)">
<rect x="596" y="162" width="138" height="78" fill="url(#hl2)"/>
<rect x="594" y="160" width="63" height="82" fill="#573617"/>
<rect x="611" y="163" width="46" height="11" fill="#4a2e14"/>
<rect x="594" y="162" width="17" height="80" fill="#2b2a27"/>
<rect x="597" y="164" width="14" height="10" fill="#a3a39b"/>
<rect x="597" y="174.6" width="14" height="2" fill="#55524c"/><rect x="597" y="191" width="14" height="2" fill="#4a4742"/><rect x="597" y="209" width="14" height="2" fill="#4a4742"/>
<rect x="606" y="186" width="3" height="4" fill="#7a3a34"/><rect x="598" y="198" width="2" height="8" fill="#3a4a7a"/>
<rect x="619" y="177" width="13" height="36" fill="#2d2117"/><rect x="638.6" y="177" width="13" height="36" fill="#2d2117"/>
<rect x="620.4" y="180" width="10.4" height="12" fill="#6c6a66"/><path d="M623 180V192M625.6 180V192M628.2 180V192" stroke="#4a4846" stroke-width="0.6"/>
<rect x="619" y="192.6" width="13" height="2.2" fill="#573617"/>
<rect x="618" y="198" width="3.4" height="12" fill="#d5cfc7"/><rect x="621.4" y="198.6" width="2.4" height="11.4" fill="#b04a3c"/><rect x="623.8" y="198.4" width="3" height="11.6" fill="#dcd8d0"/><rect x="626.8" y="199" width="2" height="11" fill="#b8564a"/><rect x="628.8" y="199" width="2.6" height="11" fill="#cfc9c1"/>
<rect x="619" y="210.6" width="13" height="2.2" fill="#573617"/>
<rect x="618" y="214" width="12" height="6" fill="#9a9690"/>
<circle cx="637" cy="171.4" r="2.9" fill="#d2d2da"/><circle cx="637" cy="171.4" r="1.5" fill="#6a6a9a"/>
<rect x="718.4" y="162" width="16" height="80" fill="#a2a4b4"/><path d="M722 164V222M726.6 164V222M730.6 164V222" stroke="#8e90a4" stroke-width="1.5"/><path d="M718 176H734M718 190H734M718 204H734M718 218H734" stroke="#b4b6c4" stroke-width="2.4" opacity="0.6"/>
<path d="M606 240C610 226 622 217 640 213H656C664 216 668 226 669 240Z" fill="#3c415c"/>
<path d="M612 232L640 216M620 238L650 218M632 240L662 222M616 222L640 236M628 216L654 232" stroke="#cfd1dc" stroke-width="1.2" fill="none"/>
<path d="M632.8 198C631.6 186 636 180 647 179.4C657.6 179.4 662.4 185 661.8 198L660 201H634Z" fill="#1f1b19"/>
<path d="M634 193C634.6 188 661 188 661.6 193C662.2 206 660.6 215 657 220C653 224.6 643 224.6 639.6 220C636 215 633.6 206 634 193Z" fill="#a57865"/>
<path d="M633.6 191C640 186.4 655 186.4 661.6 191L661.4 194.6C655 192 640 192 633.8 194.6Z" fill="#1f1b19"/>
<path d="M637 206C640 216 656 216 659 206C657 212 653 216 648 216C643 216 639 212 637 206Z" fill="#8f6454"/>
</g><g filter="url(#b2)">
<rect x="672.4" y="171.6" width="25" height="25.4" fill="#dad8d0" stroke="#3d3247" stroke-width="1.3"/><rect x="675.4" y="174.6" width="19" height="19.4" fill="#ccc8bc"/>
<path d="M680.4 180V190M684.6 178V191M688.4 181V187M691 182V186" stroke="#6e6a64" stroke-width="0.7"/>
<rect x="635.8" y="195.8" width="11.4" height="6" rx="1.5" fill="#62d47a" stroke="#2c2c2c" stroke-width="0.9"/><rect x="650.2" y="195.8" width="10.4" height="6" rx="1.5" fill="#8a9a80" stroke="#2c2c2c" stroke-width="0.9"/><rect x="650.8" y="196.4" width="5.4" height="4.8" rx="1.2" fill="#62d47a"/><path d="M647.2 197.6H650.2" stroke="#2c2c2c" stroke-width="0.8"/>
<ellipse cx="648.4" cy="214" rx="3.4" ry="1.6" fill="#c9a09a"/><ellipse cx="648.4" cy="214.4" rx="2.4" ry="0.8" fill="#5a2f2c"/>
</g>
<rect x="597.8" y="222.2" width="133.6" height="16.4" fill="#000" opacity="0.64"/>
</g>
<rect x="597.8" y="222.2" width="36.4" height="16.4" fill="#f2a024"/>
<text x="616" y="233.6" font-size="8.4" fill="#ffffff" text-anchor="middle" font-weight="bold">主持人</text>
<rect x="635" y="225.6" width="10.4" height="7.4" rx="0.7" fill="#ffffff"/><path d="M637.8 231.4C638.2 229.2 639.6 228.4 641 228.4V227.2L643.2 229L641 230.8V229.6C639.8 229.6 638.8 230.2 637.8 231.4Z" fill="#333"/><path d="M637.4 235.4H643M640.2 233V235.4" stroke="#ffffff" stroke-width="1"/>
<g transform="translate(650.6 224.9) scale(1.18)"><rect x="2.1" y="0" width="3.8" height="6.4" rx="1.9" fill="#ffffff"/><rect x="2.1" y="2.4" width="3.8" height="4" rx="1.9" fill="#2ad15c"/><path d="M0.5 4.2V4.6A3.5 3.5 0 0 0 7.5 4.6V4.2" fill="none" stroke="#ffffff" stroke-width="0.9"/><path d="M4 8V9.6M2 9.7H6" stroke="#ffffff" stroke-width="0.9" fill="none"/></g>
<text x="664" y="233.9" font-size="7.8" fill="#f0f0f0">李寅龙</text>
<rect x="597.8" y="238.9" width="133.6" height="74.2" fill="#232323"/>
<rect x="597.8" y="296.9" width="133.6" height="16.200000000000003" fill="#101010"/>
<path d="M598.5 296.9V239.6H730.7V296.9" fill="none" stroke="#ffffff" stroke-width="1.4"/>
<path d="M598.2 296.9V312.70000000000005H731V296.9" fill="none" stroke="#3c3c3c" stroke-width="0.8"/>
<clipPath id="c238"><circle cx="664.7" cy="271.5" r="16"/></clipPath>
<g clip-path="url(#c238)"><rect x="648" y="255.5" width="33" height="32" fill="url(#sky)"/><g filter="url(#b2)"><ellipse cx="665" cy="264.9" rx="8.4" ry="3.8" fill="#eef3fa" opacity="0.92"/><ellipse cx="657" cy="270.5" rx="8" ry="2.6" fill="#eef3fa" opacity="0.88"/><ellipse cx="671" cy="271.1" rx="8.4" ry="2.4" fill="#e9f0f8" opacity="0.85"/><ellipse cx="661" cy="280.5" rx="7.4" ry="2.6" fill="#c9a18e" opacity="0.8"/><ellipse cx="671" cy="283.5" rx="5" ry="2" fill="#c49a7e" opacity="0.7"/><ellipse cx="675" cy="278.1" rx="5" ry="2" fill="#5a9a62" opacity="0.8"/></g></g>
<g transform="translate(601.6 300.1) scale(1.18)"><rect x="2.1" y="0" width="3.8" height="6.4" rx="1.9" fill="#ffffff"/><path d="M0.5 4.2V4.6A3.5 3.5 0 0 0 7.5 4.6V4.2" fill="none" stroke="#ffffff" stroke-width="0.9"/><path d="M4 8V9.6M2 9.7H6" stroke="#ffffff" stroke-width="0.9" fill="none"/></g>
<text x="615.6" y="308.7" font-size="7.8" fill="#d4d4d4">高风祯</text>
<rect x="597.8" y="313.9" width="133.6" height="73.2" fill="#232323"/>
<rect x="597.8" y="371.9" width="133.6" height="15.200000000000003" fill="#101010"/>
<path d="M598.5 371.9V314.59999999999997H730.7V371.9" fill="none" stroke="#ffffff" stroke-width="1.4"/>
<path d="M598.2 371.9V386.7H731V371.9" fill="none" stroke="#3c3c3c" stroke-width="0.8"/>
<clipPath id="c313"><circle cx="664.7" cy="346.5" r="16"/></clipPath>
<circle cx="664.7" cy="346.5" r="16" fill="#e6e6e6"/>
<g clip-path="url(#c313)"><path transform="translate(648.7 330.5) scale(1.4545)" d="M7 5.4C7.2 4 8.2 3.4 9.4 3.4H13.6C15 3.4 15.6 4.4 15.6 6V9C16.4 9.2 16.5 10.6 15.5 11.6C15.2 13.2 14.4 14.4 13.3 15.2V16.5C14.8 17.3 17.2 17.8 17.9 19.2C18.2 19.9 18.3 20.8 18.3 22H3.7C3.7 20.8 3.8 19.9 4.1 19.2C4.8 17.8 7.3 17.3 8.8 16.5V15.2C7.7 14.4 6.9 13.2 6.6 11.6C5.6 10.6 5.7 9.2 6.5 9V6.4Z" fill="#c4c4c4"/></g>
<g transform="translate(601.6 375.09999999999997) scale(1.18)"><rect x="2.1" y="0" width="3.8" height="6.4" rx="1.9" fill="#ffffff"/><path d="M0.5 4.2V4.6A3.5 3.5 0 0 0 7.5 4.6V4.2" fill="none" stroke="#ffffff" stroke-width="0.9"/><path d="M4 8V9.6M2 9.7H6" stroke="#ffffff" stroke-width="0.9" fill="none"/><path d="M0.2 9.4L8 0.6" stroke="#e23b3b" stroke-width="0.8"/></g>
<text x="615.6" y="383.7" font-size="7.8" fill="#d4d4d4">杨艳</text>
<rect x="597.8" y="388.6" width="133.6" height="74.2" fill="#232323"/>
<rect x="597.8" y="446.6" width="133.6" height="16.200000000000003" fill="#101010"/>
<path d="M598.5 446.6V389.3H730.7V446.6" fill="none" stroke="#ffffff" stroke-width="1.4"/>
<path d="M598.2 446.6V462.40000000000003H731V446.6" fill="none" stroke="#3c3c3c" stroke-width="0.8"/>
<clipPath id="c388"><circle cx="664.7" cy="421.20000000000005" r="16"/></clipPath>
<circle cx="664.7" cy="421.20000000000005" r="16" fill="#e6e6e6"/>
<g clip-path="url(#c388)"><path transform="translate(648.7 405.20000000000005) scale(1.4545)" d="M7 5.4C7.2 4 8.2 3.4 9.4 3.4H13.6C15 3.4 15.6 4.4 15.6 6V9C16.4 9.2 16.5 10.6 15.5 11.6C15.2 13.2 14.4 14.4 13.3 15.2V16.5C14.8 17.3 17.2 17.8 17.9 19.2C18.2 19.9 18.3 20.8 18.3 22H3.7C3.7 20.8 3.8 19.9 4.1 19.2C4.8 17.8 7.3 17.3 8.8 16.5V15.2C7.7 14.4 6.9 13.2 6.6 11.6C5.6 10.6 5.7 9.2 6.5 9V6.4Z" fill="#c4c4c4"/></g>
<g transform="translate(601.6 449.8) scale(1.18)"><rect x="2.1" y="0" width="3.8" height="6.4" rx="1.9" fill="#ffffff"/><path d="M0.5 4.2V4.6A3.5 3.5 0 0 0 7.5 4.6V4.2" fill="none" stroke="#ffffff" stroke-width="0.9"/><path d="M4 8V9.6M2 9.7H6" stroke="#ffffff" stroke-width="0.9" fill="none"/><path d="M0.2 9.4L8 0.6" stroke="#e23b3b" stroke-width="0.8"/></g>
<text x="615.6" y="458.40000000000003" font-size="7.8" fill="#d4d4d4">曹霞</text>
<rect x="624" y="441" width="81.6" height="22.4" fill="#0a0a0a" opacity="0.8"/>
<path d="M660.8 450.2L665 454.2L669.2 450.2" fill="none" stroke="#ffffff" stroke-width="1.1"/>
</svg>
<!--/TILES-->

<div id="toolbar" class="abs">
<!--TOOLBAR-->
<div class="abs" style="left:429px;top:6px;width:62.5px;height:39.5px;background:#e4e5e8;border-radius:3px;"></div>
<div class="tb" style="left:128.3px"><svg style="left:22.5px;top:13px" width="15" height="19.5" viewBox="0 0 15 19.5"><rect x="3.9" y="0" width="7.2" height="12.2" rx="3.6" fill="#55565a"/><path d="M1 8.2V8.8A6.5 6.5 0 0 0 14 8.8V8.2" fill="none" stroke="#55565a" stroke-width="1.4"/><path d="M7.5 15V18.6M3.6 18.7H11.4" stroke="#55565a" stroke-width="1.4" fill="none"/></svg><div class="lb">静音</div></div>
<div class="caret" style="left:182px;top:19px"></div>
<div class="tb" style="left:192.9px"><svg style="left:18.8px;top:14.3px" width="22.5" height="13.6" viewBox="0 0 22.5 13.6"><rect x="0" y="0" width="15.6" height="13.6" rx="1.8" fill="#55565a"/><path d="M16.4 4.6L22.3 0.6V13L16.4 9Z" fill="#55565a"/></svg><div class="lb">停止视频</div></div>
<div class="caret" style="left:246.5px;top:19px"></div>
<div class="tb" style="left:257.3px"><svg style="left:19.5px;top:12.3px" width="21" height="18" viewBox="0 0 21 18"><rect x="0.7" y="0.7" width="19.6" height="13.2" rx="0.8" fill="#4b4d52" stroke="#17c964" stroke-width="1.4"/><path d="M5 17.2H16" stroke="#17c964" stroke-width="1.4"/><path d="M7.2 10.2C7.6 7.4 9.4 5.9 11.6 5.8V4.1L14.6 6.7L11.6 9.2V7.6C9.8 7.6 8.3 8.4 7.2 10.2Z" fill="#17c964"/></svg><div class="lb">共享屏幕</div></div>
<div class="tb" style="left:310px"><svg style="left:18px;top:12.5px" width="24" height="18.5" viewBox="0 0 24 18.5"><path d="M9.2 0C12 0 13.4 2 13.4 4.6C13.4 6.4 12.7 8 11.8 9V10.4C13.5 11.4 16.6 12.3 17.6 14.2C18 15 18.2 16.4 18.2 17.6H0C0 16.4 0.2 15 0.6 14.2C1.6 12.3 4.8 11.4 6.5 10.4V9C5.6 8 4.9 6.4 4.9 4.6C4.9 2 6.4 0 9.2 0Z" fill="#55565a"/><circle cx="18.6" cy="12.8" r="5.2" fill="#fafafa"/><circle cx="18.6" cy="12.8" r="4.3" fill="#55565a"/><path d="M18.6 10.5V15.1M16.3 12.8H20.9" stroke="#fafafa" stroke-width="1.3"/></svg><div class="lb">邀请</div></div>
<div class="tb" style="left:367.3px"><svg style="left:18px;top:12.5px" width="24" height="18.5" viewBox="0 0 24 18.5"><path d="M15.2 0.6C17.6 0.6 18.8 2.4 18.8 4.7C18.8 6.3 18.2 7.8 17.4 8.7V10C18.9 10.9 21.8 11.8 22.7 13.6C23.1 14.4 23.3 15.8 23.3 17.6H17.5L13 8L12.4 1.6C13.1 1 14 0.6 15.2 0.6Z" fill="#55565a"/><path d="M9 0C11.8 0 13.2 2 13.2 4.6C13.2 6.4 12.5 8 11.6 9V10.4C13.3 11.4 16.4 12.3 17.4 14.2C17.8 15 18 16.4 18 17.6H0C0 16.4 0.2 15 0.6 14.2C1.6 12.3 4.6 11.4 6.3 10.4V9C5.4 8 4.7 6.4 4.7 4.6C4.7 2 6.2 0 9 0Z" fill="#55565a" stroke="#fafafa" stroke-width="0.9"/></svg><div class="lb">成员<span style="font-size:9px">(8)</span></div></div>
<div class="tb" style="left:430.3px"><svg style="left:20.9px;top:12.2px" width="18.4" height="18.6" viewBox="0 0 18.4 18.6"><path d="M1.6 0H16.7A1.6 1.6 0 0 1 18.3 1.6V16.2H18.3L14.4 18.4L13.6 16.2H1.6A1.6 1.6 0 0 1 0 14.6V1.6A1.6 1.6 0 0 1 1.6 0Z" fill="#8d8f93"/><circle cx="4.6" cy="8" r="1.55" fill="#f1f1f3"/><circle cx="9.2" cy="8" r="1.55" fill="#f1f1f3"/><circle cx="13.8" cy="8" r="1.55" fill="#f1f1f3"/></svg><div class="lb">聊天</div></div>
<div class="tb" style="left:492.79999999999995px"><svg style="left:21.4px;top:11.8px" width="17.4" height="19.6" viewBox="0 0 17.4 19.6"><path d="M1.6 0H11.2L17.4 6.2V18A1.6 1.6 0 0 1 15.8 19.6H1.6A1.6 1.6 0 0 1 0 18V1.6A1.6 1.6 0 0 1 1.6 0Z" fill="#55565a"/><path d="M11.2 0V4.6A1.6 1.6 0 0 0 12.8 6.2H17.4Z" fill="#9a9b9f"/><rect x="4" y="9.4" width="9.4" height="1.9" fill="#fafafa"/><rect x="4" y="13.2" width="9.4" height="1.9" fill="#fafafa"/></svg><div class="lb">会议文档<span style="font-size:9px">(4)</span></div></div>
<div class="tb" style="left:547.6px"><svg style="left:21px;top:13.2px" width="18.2" height="16.8" viewBox="0 0 18.2 16.8"><rect x="0" y="0" width="8.2" height="7.6" rx="1" fill="#55565a"/><rect x="10.3" y="0.5" width="7.2" height="6.6" rx="0.8" fill="#fff" stroke="#55565a" stroke-width="1"/><rect x="0" y="9.2" width="8.2" height="7.6" rx="1" fill="#55565a"/><rect x="9.8" y="9.2" width="8.2" height="7.6" rx="1" fill="#55565a"/></svg><div class="lb">设置</div></div>
<!--/TOOLBAR-->
</div>
<div id="leave" class="abs">离开会议</div>

<div id="panel" class="abs">
  <div id="phead" class="abs">
    <svg class="abs" style="left:10px;top:9.4px" width="7" height="5" viewBox="0 0 7 5" fill="none" stroke="#b4b4b4" stroke-width="0.9"><path d="M0.7 0.8L3.5 3.6L6.3 0.8"/></svg>
    <div class="abs t">成员(8人)</div>
  </div>
<!--MEMBERS-->
  <div class="abs mem" style="top:30.1px"><div class="abs av"><svg width="22.6" height="22.6" viewBox="0 0 22 22"><defs><filter id="ab" x="-20%" y="-20%" width="140%" height="140%"><feGaussianBlur stdDeviation="0.45"/></filter><linearGradient id="a0" x1="0" y1="0" x2="0" y2="1"><stop offset="0" stop-color="#c3d8f3"/><stop offset="0.5" stop-color="#e9eff8"/><stop offset="0.62" stop-color="#efeae2"/><stop offset="1" stop-color="#fbfaf9"/></linearGradient></defs><rect width="22" height="22" fill="url(#a0)"/><g filter="url(#ab)"><ellipse cx="14" cy="4" rx="5.4" ry="2.6" fill="#7ea9e6"/><ellipse cx="7" cy="7.4" rx="5" ry="2.4" fill="#f2f5fb"/><ellipse cx="15" cy="8.6" rx="5" ry="1.8" fill="#eef2f9"/><rect x="0" y="11.4" width="6.4" height="2.2" fill="#a99b80"/><rect x="6.4" y="11.9" width="9" height="1.3" fill="#76b2c2"/><rect x="15" y="10.8" width="7" height="2.9" fill="#a39372"/><rect x="16" y="13" width="4" height="1.2" fill="#b8646a"/><circle cx="8.8" cy="12.2" r="1.7" fill="#2b1b19"/><ellipse cx="8.4" cy="15.5" rx="3.3" ry="1.5" fill="#b33636"/><circle cx="9.6" cy="13.6" r="0.9" fill="#d9b09a"/></g></svg></div><div class="abs nm">白扬<i>(我)</i></div></div>
  <div class="abs mem" style="top:67.5px"><div class="abs av"><svg width="22.6" height="22.6" viewBox="0 0 22 22"><rect width="22" height="22" fill="#1b1511"/><g filter="url(#ab)"><path d="M10 0H22V9L12 5Z" fill="#28615a"/><path d="M12 6L22 9V12L12 8Z" fill="#3a2a22"/><path d="M11 8L22 12.6V14.4L11 9.6ZM11 11L22 15.6V17L11 12.4Z" fill="#5a463c"/><path d="M0 8L8 6L10 9L2 13Z" fill="#7b3c22"/><path d="M2 18L9.4 10L11 11.4L5 20Z" fill="#8d5c30"/><path d="M0 15L6 12L7 13.4L1 17Z" fill="#6b4526"/><path d="M8 18L12.6 16.6L14 19L9 20.6Z" fill="#dab384"/><circle cx="11.8" cy="11.4" r="1.3" fill="#62c43c"/><path d="M6 2L10 8" stroke="#4d4438" stroke-width="1"/></g></svg></div><div class="abs nm">李寅龙<i>(主持人)</i></div></div>
  <div class="abs mem" style="top:104.8px"><div class="abs av"><svg width="22.6" height="22.6" viewBox="0 0 22 22"><defs><linearGradient id="a2" x1="0" y1="0" x2="0" y2="1"><stop offset="0" stop-color="#79b4e6"/><stop offset="0.5" stop-color="#a9cdee"/><stop offset="0.6" stop-color="#c4d6e4"/><stop offset="0.64" stop-color="#86a2b8"/><stop offset="0.7" stop-color="#7f9f62"/><stop offset="1" stop-color="#9aa85c"/></linearGradient></defs><rect width="22" height="22" fill="url(#a2)"/><g filter="url(#ab)"><ellipse cx="11" cy="6.6" rx="5.6" ry="2.6" fill="#eef3fa" opacity="0.92"/><ellipse cx="6" cy="10.4" rx="5.4" ry="1.8" fill="#eef3fa" opacity="0.88"/><ellipse cx="15" cy="10.8" rx="5.6" ry="1.6" fill="#e9f0f8" opacity="0.85"/><ellipse cx="9" cy="17" rx="5" ry="1.8" fill="#c9a18e" opacity="0.8"/><ellipse cx="15.6" cy="19" rx="3.4" ry="1.4" fill="#c49a7e" opacity="0.7"/><ellipse cx="18" cy="15.6" rx="3.4" ry="1.4" fill="#5a9a62" opacity="0.8"/></g></svg></div><div class="abs nm">高风祯</div></div>
  <div class="abs mem" style="top:142.2px"><div class="abs av"><svg width="22.6" height="22.6" viewBox="0 0 22 22"><rect width="22" height="22" fill="#e5e5e5"/><path d="M7 5.4C7.2 4 8.2 3.4 9.4 3.4H13.6C15 3.4 15.6 4.4 15.6 6V9C16.4 9.2 16.5 10.6 15.5 11.6C15.2 13.2 14.4 14.4 13.3 15.2V16.5C14.8 17.3 17.2 17.8 17.9 19.2C18.2 19.9 18.3 20.8 18.3 22H3.7C3.7 20.8 3.8 19.9 4.1 19.2C4.8 17.8 7.3 17.3 8.8 16.5V15.2C7.7 14.4 6.9 13.2 6.6 11.6C5.6 10.6 5.7 9.2 6.5 9V6.4Z" fill="#c9c9c9"/></svg></div><div class="abs nm">曹霞</div></div>
  <div class="abs mem" style="top:179.6px"><div class="abs av"><svg width="22.6" height="22.6" viewBox="0 0 22 22"><rect width="22" height="22" fill="#e5e5e5"/><path d="M7 5.4C7.2 4 8.2 3.4 9.4 3.4H13.6C15 3.4 15.6 4.4 15.6 6V9C16.4 9.2 16.5 10.6 15.5 11.6C15.2 13.2 14.4 14.4 13.3 15.2V16.5C14.8 17.3 17.2 17.8 17.9 19.2C18.2 19.9 18.3 20.8 18.3 22H3.7C3.7 20.8 3.8 19.9 4.1 19.2C4.8 17.8 7.3 17.3 8.8 16.5V15.2C7.7 14.4 6.9 13.2 6.6 11.6C5.6 10.6 5.7 9.2 6.5 9V6.4Z" fill="#c9c9c9"/></svg></div><div class="abs nm">陈玲</div></div>
  <div class="abs mem" style="top:217.0px"><div class="abs av"><svg width="22.6" height="22.6" viewBox="0 0 22 22"><rect width="22" height="22" fill="#8fba4e"/><g filter="url(#ab)"><ellipse cx="10" cy="4.6" rx="6" ry="2.6" fill="#b9cf5a"/><circle cx="3.2" cy="5.6" r="2" fill="#a23246"/><circle cx="2.4" cy="9" r="1.6" fill="#c9506a"/><circle cx="18.6" cy="5.6" r="2" fill="#dfe6ee"/><ellipse cx="3" cy="13.6" rx="2.8" ry="2.8" fill="#e5b31f"/><circle cx="2.4" cy="14.4" r="1.3" fill="#3a2410"/><ellipse cx="9.6" cy="19.4" rx="3" ry="2.6" fill="#e5b31f"/><circle cx="9.6" cy="19" r="1.3" fill="#3a2410"/><ellipse cx="11.4" cy="14" rx="3.4" ry="2.6" fill="#cfae88"/><ellipse cx="15" cy="9.8" rx="4.6" ry="1.8" fill="#d9b060"/><ellipse cx="15" cy="12.6" rx="3.6" ry="3.2" fill="#2a2018"/><ellipse cx="15.6" cy="13.4" rx="2.2" ry="2.2" fill="#f0d9c0"/><ellipse cx="16" cy="16" rx="2.2" ry="1.6" fill="#e9eaf2"/><circle cx="19.4" cy="17.6" r="1.8" fill="#4a7ab0"/></g></svg></div><div class="abs nm">陈雅娟</div></div>
  <div class="abs mem" style="top:254.3px"><div class="abs av"><svg width="22.6" height="22.6" viewBox="0 0 22 22"><rect width="22" height="22" fill="#b5d8dc"/><g filter="url(#ab)"><path d="M3 22C3 17.6 6.6 15.4 11 15.2C15.6 15.2 19 17.6 19 22Z" fill="#f5e9ed"/><path d="M8 14.6C7 9 8.4 2.6 12.6 2.6C16.6 2.6 17.8 8 17.6 12C17.5 14.4 17.2 16 16.4 16.6L13.6 15L8.4 15.4Z" fill="#1f1a1b"/><ellipse cx="11.4" cy="9" rx="2.7" ry="3.6" fill="#eed3c6"/><path d="M10 12L13.2 12L13.6 15.4L9.6 15.4Z" fill="#ecd0c2"/><ellipse cx="11.2" cy="10.9" rx="0.9" ry="0.45" fill="#d96a7a"/><path d="M8.4 7C9 4 11 3 13 3.4C11.6 4.6 10 6 9.4 9Z" fill="#1f1a1b"/></g></svg></div><div class="abs nm">胡思旭</div></div>
  <div class="abs mem" style="top:291.7px"><div class="abs av"><svg width="22.6" height="22.6" viewBox="0 0 22 22"><rect width="22" height="22" fill="#e5e5e5"/><path d="M7 5.4C7.2 4 8.2 3.4 9.4 3.4H13.6C15 3.4 15.6 4.4 15.6 6V9C16.4 9.2 16.5 10.6 15.5 11.6C15.2 13.2 14.4 14.4 13.3 15.2V16.5C14.8 17.3 17.2 17.8 17.9 19.2C18.2 19.9 18.3 20.8 18.3 22H3.7C3.7 20.8 3.8 19.9 4.1 19.2C4.8 17.8 7.3 17.3 8.8 16.5V15.2C7.7 14.4 6.9 13.2 6.6 11.6C5.6 10.6 5.7 9.2 6.5 9V6.4Z" fill="#c9c9c9"/></svg></div><div class="abs nm">杨艳</div></div>
<!--/MEMBERS-->
  <div class="abs" style="left:0;top:456px;width:163px;height:1px;background:#f0f0f0;"></div>
  <div id="mutebtn" class="abs">静音</div>
</div>

<!-- bottom strip -->
<div class="abs" style="left:0;top:527px;width:900px;height:3px;background:#f2f2f2;"></div>
<div class="abs" style="left:0;top:527px;width:68px;height:3px;background:#4a94a6;"></div>
<div class="abs" style="left:68px;top:527px;width:105px;height:3px;background:#fdfdfd;"></div>
<div class="abs" style="left:107px;top:527.6px;width:56px;height:2.4px;overflow:hidden;font-size:9px;line-height:9px;color:#222;white-space:nowrap;letter-spacing:0.5px;">【内蒙古师范】</div>
<div class="abs" style="left:788px;top:527px;width:112px;height:3px;background:linear-gradient(#2f8196,#1d5f78);"></div>
</body>
</html>
